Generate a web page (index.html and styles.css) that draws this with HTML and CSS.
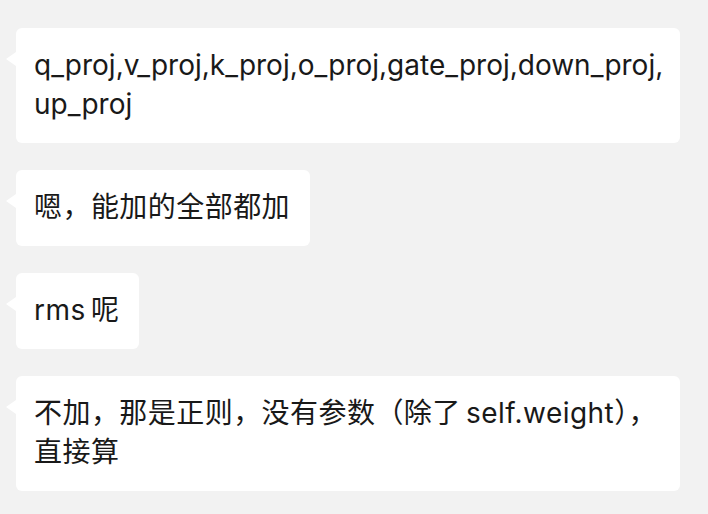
FILE: index.html
```html
<!DOCTYPE html>
<html lang="zh-CN">
<head>
<meta charset="utf-8">
<title>Chat</title>
<link rel="stylesheet" href="styles.css">
</head>
<body>
<div class="chat">
  <div class="bubble full">q_proj,v_proj,k_proj,o_proj,gate_proj,down_proj,<br>up_proj</div>
  <div class="bubble cjk">嗯，能加的全部都加</div>
  <div class="bubble cjk">rms 呢</div>
  <div class="bubble cjk full">不加，那是正则，没有参数（除了 self.weight），<br>直接算</div>
</div>
</body>
</html>
```
FILE: styles.css
```css
html, body {
  margin: 0;
  padding: 0;
  background: #f2f2f2;
}
.chat {
  display: flex;
  flex-direction: column;
  align-items: flex-start;
  gap: 27px;
  padding: 28px 0 0 16px;
  font-family: Inter, "Noto Sans CJK SC", sans-serif;
  font-size: 28px;
  line-height: 39px;
  color: #191919;
}
.bubble {
  position: relative;
  box-sizing: border-box;
  max-width: 664px;
  background: #ffffff;
  border-radius: 6px;
  padding: 18px 20px 19px 18px;
  word-spacing: -3px;
}
.bubble.full {
  width: 664px;
}
.bubble.cjk {
  letter-spacing: 0.45px;
}
.bubble::before {
  content: "";
  position: absolute;
  left: -10px;
  top: 24px;
  border-top: 7.5px solid transparent;
  border-bottom: 7.5px solid transparent;
  border-right: 10px solid #ffffff;
}
```
